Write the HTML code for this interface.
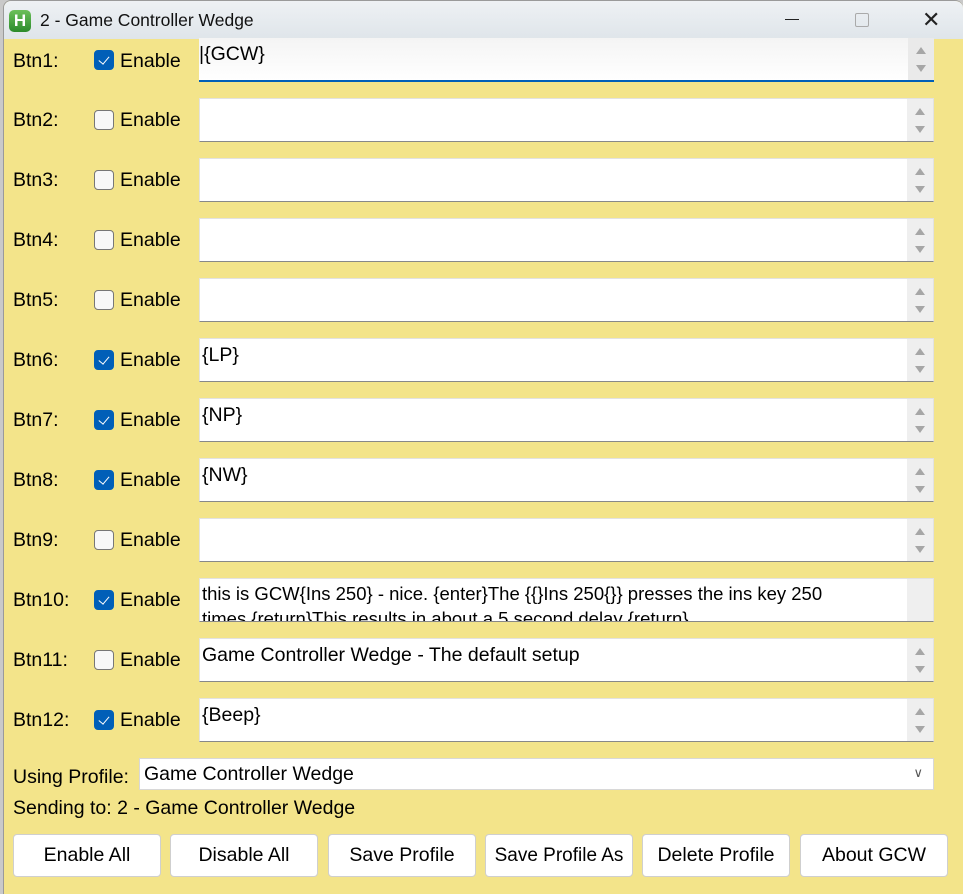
<!DOCTYPE html>
<html><head><meta charset="utf-8"><style>
*{box-sizing:border-box;margin:0;padding:0}
body{width:963px;height:894px;overflow:hidden;background:#c9c9c9;font-family:"Liberation Sans",sans-serif;position:relative}
.win{position:absolute;left:3px;top:0;width:960px;height:894px;background:#f3e48a;border-left:1px solid #9a9a9a;border-top:1px solid #9a9a9a;border-radius:8px 8px 0 0;overflow:hidden}
.title{position:absolute;left:0;top:0;width:100%;height:38px;background:linear-gradient(#eef1f4,#dfe5ea);}
.logo{position:absolute;left:5px;top:9px;width:22px;height:22px;border-radius:5px;background:linear-gradient(#6cc05a,#2b8a2b);color:#fff;font-weight:bold;font-size:17px;text-align:center;line-height:22px}
.ttext{position:absolute;left:36px;top:9px;font-size:17.5px;color:#111}
.abs{position:absolute}
.lbl{position:absolute;font-size:19.5px;color:#000}
.cb{position:absolute;width:20px;height:20px;border-radius:4px;border:1px solid #777;background:#f8f8f8}
.cb.on{background:#005fb8;border-color:#005fb8}
.cb.on:after{content:"";position:absolute;left:6px;top:3px;width:5px;height:9px;border:solid #fff;border-width:0 1.3px 1.3px 0;transform:rotate(40deg)}
.tb{position:absolute;left:196px;width:735px;height:44px;background:#fff;border:1px solid #e2e2e2;border-bottom:1px solid #888;overflow:hidden}
.tb span{position:absolute;left:2px;top:3px;font-size:19.5px;color:#000;white-space:nowrap;line-height:27px}
.sb{position:absolute;right:0;top:0;width:26px;height:42px;background:#efefef}
.sb i{position:absolute;left:8px;width:0;height:0;border-left:5px solid transparent;border-right:5px solid transparent}
.sb .u{top:9px;border-bottom:7px solid #a6a6a6}
.sb .d{top:27px;border-top:7px solid #a6a6a6}
.btn{position:absolute;top:834px;width:148px;height:43px;background:#fff;border:1px solid #cfcfcf;border-radius:4px;font-size:19.5px;text-align:center;line-height:41px;color:#000;white-space:nowrap}
</style></head><body>
<div class="win">
<div class="title"><div class="logo">H</div><div class="ttext">2 - Game Controller Wedge</div>
<div class="abs" style="left:781px;top:18px;width:14px;height:1px;background:#222"></div>
<div class="abs" style="left:851px;top:12px;width:14px;height:14px;border:1px solid #aaa;border-radius:2px"></div>
<div class="abs" style="left:918px;top:10px;font-size:22px;color:#222;line-height:18px">✕</div>
</div>
</div>
<div class="tb" style="left:199px;top:38px;height:44px;background:linear-gradient(#f4f4f4,#fff);border:none;border-bottom:2px solid #005fb8;width:735px"><span style="left:0">|{GCW}</span><div class="sb" style="background:#eaeaea"><i class="u"></i><i class="d"></i></div></div>
<div class="lbl" style="left:13px;top:50px">Btn1:</div><div class="cb on" style="left:94px;top:50px"></div><div class="lbl" style="left:120px;top:50px">Enable</div>
<div class="lbl" style="left:13px;top:109px">Btn2:</div><div class="cb" style="left:94px;top:110px"></div><div class="lbl" style="left:120px;top:109px">Enable</div>
<div class="tb" style="left:199px;top:98px"><div class="sb"><i class="u"></i><i class="d"></i></div></div>
<div class="lbl" style="left:13px;top:169px">Btn3:</div><div class="cb" style="left:94px;top:170px"></div><div class="lbl" style="left:120px;top:169px">Enable</div>
<div class="tb" style="left:199px;top:158px"><div class="sb"><i class="u"></i><i class="d"></i></div></div>
<div class="lbl" style="left:13px;top:229px">Btn4:</div><div class="cb" style="left:94px;top:230px"></div><div class="lbl" style="left:120px;top:229px">Enable</div>
<div class="tb" style="left:199px;top:218px"><div class="sb"><i class="u"></i><i class="d"></i></div></div>
<div class="lbl" style="left:13px;top:289px">Btn5:</div><div class="cb" style="left:94px;top:290px"></div><div class="lbl" style="left:120px;top:289px">Enable</div>
<div class="tb" style="left:199px;top:278px"><div class="sb"><i class="u"></i><i class="d"></i></div></div>
<div class="lbl" style="left:13px;top:349px">Btn6:</div><div class="cb on" style="left:94px;top:350px"></div><div class="lbl" style="left:120px;top:349px">Enable</div>
<div class="tb" style="left:199px;top:338px"><span>{LP}</span><div class="sb"><i class="u"></i><i class="d"></i></div></div>
<div class="lbl" style="left:13px;top:409px">Btn7:</div><div class="cb on" style="left:94px;top:410px"></div><div class="lbl" style="left:120px;top:409px">Enable</div>
<div class="tb" style="left:199px;top:398px"><span>{NP}</span><div class="sb"><i class="u"></i><i class="d"></i></div></div>
<div class="lbl" style="left:13px;top:469px">Btn8:</div><div class="cb on" style="left:94px;top:470px"></div><div class="lbl" style="left:120px;top:469px">Enable</div>
<div class="tb" style="left:199px;top:458px"><span>{NW}</span><div class="sb"><i class="u"></i><i class="d"></i></div></div>
<div class="lbl" style="left:13px;top:529px">Btn9:</div><div class="cb" style="left:94px;top:530px"></div><div class="lbl" style="left:120px;top:529px">Enable</div>
<div class="tb" style="left:199px;top:518px"><div class="sb"><i class="u"></i><i class="d"></i></div></div>
<div class="lbl" style="left:13px;top:589px">Btn10:</div><div class="cb on" style="left:94px;top:590px"></div><div class="lbl" style="left:120px;top:589px">Enable</div>
<div class="tb" style="left:199px;top:578px"><span style="top:2px;line-height:25px;font-size:18.5px">this is GCW{Ins 250} - nice. {enter}The {{}Ins 250{}} presses the ins key 250<br>times {return}This results in about a 5 second delay {return}</span><div class="sb"></div></div>
<div class="lbl" style="left:13px;top:649px">Btn11:</div><div class="cb" style="left:94px;top:650px"></div><div class="lbl" style="left:120px;top:649px">Enable</div>
<div class="tb" style="left:199px;top:638px"><span>Game Controller Wedge - The default setup</span><div class="sb"><i class="u"></i><i class="d"></i></div></div>
<div class="lbl" style="left:13px;top:709px">Btn12:</div><div class="cb on" style="left:94px;top:710px"></div><div class="lbl" style="left:120px;top:709px">Enable</div>
<div class="tb" style="left:199px;top:698px"><span>{Beep}</span><div class="sb"><i class="u"></i><i class="d"></i></div></div>
<div class="lbl" style="left:13px;top:766px">Using Profile:</div>
<div class="abs" style="left:139px;top:758px;width:795px;height:32px;background:#fff;border:1px solid #d8d8d8"><span class="abs" style="left:4px;top:4px;font-size:19.5px">Game Controller Wedge</span><span class="abs" style="right:10px;top:6px;font-size:13px;color:#555">&#8744;</span></div>
<div class="lbl" style="left:13px;top:797px">Sending to: 2 - Game Controller Wedge</div>
<div class="btn" style="left:13px">Enable All</div>
<div class="btn" style="left:170px">Disable All</div>
<div class="btn" style="left:328px">Save Profile</div>
<div class="btn" style="left:485px;font-size:19px">Save Profile As</div>
<div class="btn" style="left:642px">Delete Profile</div>
<div class="btn" style="left:800px">About GCW</div>
</body></html>
